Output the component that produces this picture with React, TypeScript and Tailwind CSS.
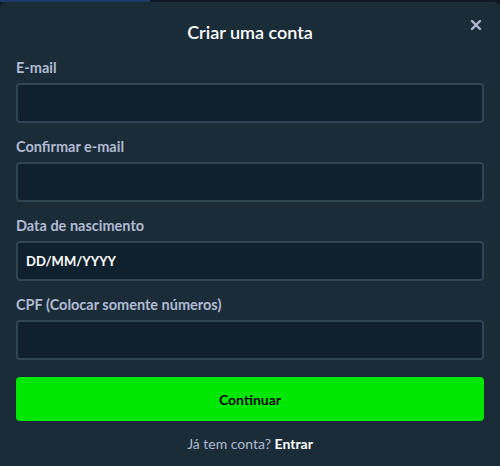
const fields = [
  { label: "E-mail", placeholder: "" },
  { label: "Confirmar e-mail", placeholder: "" },
  { label: "Data de nascimento", placeholder: "DD/MM/YYYY" },
  { label: "CPF (Colocar somente números)", placeholder: "" },
];

export default function App() {
  return (
    <div
      className="w-[500px] h-[466px] bg-[#0f1923] flex flex-col overflow-hidden"
      style={{ fontFamily: "Lato, 'Noto Sans', sans-serif" }}
    >
      <div className="h-[2px] w-[150px] bg-[#1d3a6b] shrink-0" />
      <div className="flex-1 bg-[#1a2c38] rounded-t-md flex flex-col px-4 pt-[18px]">
        <div className="relative flex items-center justify-center h-6">
          <h1 className="text-[18px] font-semibold text-white">Criar uma conta</h1>
          <button className="absolute right-[2px] top-[-1px] text-[#b1bad3]">
            <svg width="12" height="12" viewBox="0 0 12 12">
              <path
                d="M2 2 L10 10 M10 2 L2 10"
                stroke="currentColor"
                strokeWidth="2.4"
                strokeLinecap="round"
              />
            </svg>
          </button>
        </div>

        <div className="flex flex-col gap-[15px] mt-[15px]">
          {fields.map((f) => (
            <label key={f.label} className="flex flex-col gap-[6px]">
              <span className="text-[14.5px] leading-[18px] font-bold text-[#b1bad3]">
                {f.label}
              </span>
              <input
                className="h-10 w-full rounded-[4px] border-2 border-[#2f4553] bg-[#0f212e] px-[8px] text-[13px] font-bold text-white placeholder:text-white outline-none"
                placeholder={f.placeholder}
              />
            </label>
          ))}
        </div>

        <button className="mt-[17px] h-11 w-full rounded-[4px] bg-[#00e701] text-[14px] font-bold text-[#05080a]">
          Continuar
        </button>

        <p className="mt-[13px] text-center text-[14px] leading-5 text-[#b1bad3]">
          Já tem conta? <span className="font-bold text-white">Entrar</span>
        </p>
      </div>
    </div>
  );
}
